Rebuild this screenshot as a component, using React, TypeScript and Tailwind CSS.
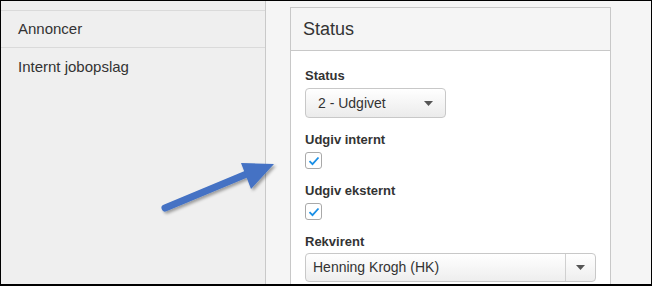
import React from "react";

function Caret() {
  return (
    <svg width="9" height="5" viewBox="0 0 9 5" className="block">
      <path d="M0 0 L9 0 L4.5 5 Z" fill="#555" />
    </svg>
  );
}

function Check() {
  return (
    <div className="w-[17px] h-[17px] rounded-[3px] border border-[#a9a9a9] bg-white flex items-center justify-center">
      <svg width="12" height="10" viewBox="0 0 12 10">
        <path d="M1.5 5.2 L4.5 8.2 L10.5 1.5" fill="none" stroke="#1a8fe6" strokeWidth="1.8" />
      </svg>
    </div>
  );
}

export default function App() {
  return (
    <div
      className="relative w-[652px] h-[286px] overflow-hidden border-t border-l border-r border-b-2 border-black flex text-[#333]"
      style={{ fontFamily: '"Liberation Sans", Arial, sans-serif' }}
    >
      <div className="w-[265px] shrink-0 bg-[#efefef] border-r border-[#c9c9c9] pt-[9px]">
        <div className="h-[38px] border-t border-b border-[#dadada] flex items-center pl-[17px] text-[15px]">
          Annoncer
        </div>
        <div className="h-[38px] flex items-center pl-[17px] text-[15px]">Internt jobopslag</div>
      </div>
      <div className="flex-1 bg-[#f5f5f5] pl-[24px] pt-[6px]">
        <div className="w-[321px] h-[300px] border border-[#c8c8c8] bg-white">
          <div className="h-[43px] bg-[#f5f5f5] border-b border-[#c8c8c8] flex items-center pl-[12px] text-[18px]">
            Status
          </div>
          <div className="pl-[14px] pr-[14px] pt-[16px]">
            <div className="text-[13px] font-bold leading-[18px]">Status</div>
            <div className="mt-[3px] w-[141px] h-[30px] rounded-[4px] border border-[#c8c8c8] bg-gradient-to-b from-white to-[#ebebeb] flex items-center justify-between pl-[12px] pr-[12px] text-[14px]">
              <span>2 - Udgivet</span>
              <Caret />
            </div>
            <div className="mt-[13px] text-[13px] font-bold leading-[18px]">Udgiv internt</div>
            <div className="mt-[3px]">
              <Check />
            </div>
            <div className="mt-[13px] text-[13px] font-bold leading-[18px]">Udgiv eksternt</div>
            <div className="mt-[3px]">
              <Check />
            </div>
            <div className="mt-[13px] text-[13px] font-bold leading-[18px]">Rekvirent</div>
            <div className="mt-[2px] w-[291px] h-[29px] rounded-[4px] border border-[#c8c8c8] bg-gradient-to-b from-white to-[#eeeeee] flex items-center text-[14px]">
              <span className="flex-1 pl-[7px]">Henning Krogh (HK)</span>
              <div className="w-[30px] h-full border-l border-[#d0d0d0] flex items-center justify-center">
                <Caret />
              </div>
            </div>
          </div>
        </div>
      </div>
      <svg className="absolute left-0 top-0 pointer-events-none" width="652" height="286">
        <defs>
          <filter id="sh" x="-20%" y="-20%" width="140%" height="140%">
            <feDropShadow dx="2" dy="2" stdDeviation="1.5" floodColor="#000" floodOpacity="0.35" />
          </filter>
        </defs>
        <g filter="url(#sh)">
          <line x1="164" y1="207" x2="248" y2="172" stroke="#4472c4" strokeWidth="7" strokeLinecap="round" />
          <path d="M240 162 L273 163 L250 188 Z" fill="#4472c4" />
        </g>
      </svg>
    </div>
  );
}
